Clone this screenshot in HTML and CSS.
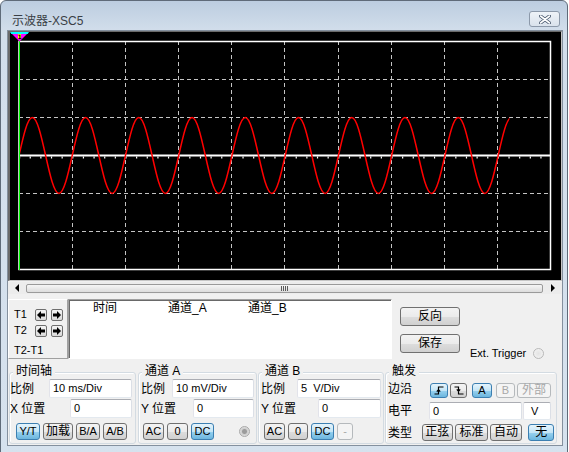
FILE: index.html
```html
<!DOCTYPE html>
<html lang="zh">
<head>
<meta charset="utf-8">
<title>示波器-XSC5</title>
<link rel="stylesheet" href="styles.css">
</head>
<body>
<div class="window">
  <div class="titlebar">
    <span class="title">示波器-XSC5</span>
    <button class="close" aria-label="关闭">
      <svg width="12" height="9" viewBox="0 0 12 9">
        <path d="M1.5 1 L10.5 8 M10.5 1 L1.5 8" stroke="#4b5b70" stroke-width="3.4" stroke-linecap="round"/>
        <path d="M1.5 1 L10.5 8 M10.5 1 L1.5 8" stroke="#ffffff" stroke-width="1.6" stroke-linecap="round"/>
      </svg>
    </button>
  </div>
  <div class="client">
    <div class="screen">
      <svg class="scope" width="551" height="248" viewBox="10 32 551 248">
        <defs>
          <clipPath id="clipA"><rect x="19" y="41" width="490.5" height="229"/></clipPath>
        </defs>
        <g class="grid">
          <line x1="72.5" y1="41" x2="72.5" y2="270"/>
          <line x1="125.5" y1="41" x2="125.5" y2="270"/>
          <line x1="178.5" y1="41" x2="178.5" y2="270"/>
          <line x1="231.5" y1="41" x2="231.5" y2="270"/>
          <line x1="284.5" y1="41" x2="284.5" y2="270"/>
          <line x1="338.5" y1="41" x2="338.5" y2="270"/>
          <line x1="391.5" y1="41" x2="391.5" y2="270"/>
          <line x1="444.5" y1="41" x2="444.5" y2="270"/>
          <line x1="497.5" y1="41" x2="497.5" y2="270"/>
          <line x1="19" y1="79.5" x2="551" y2="79.5"/>
          <line x1="19" y1="117.5" x2="551" y2="117.5"/>
          <line x1="19" y1="193.5" x2="551" y2="193.5"/>
          <line x1="19" y1="231.5" x2="551" y2="231.5"/>
        </g>
        <rect class="frame" x="19" y="41.5" width="531.5" height="228"/>
        <line class="trace-b" x1="19" y1="155.5" x2="550" y2="155.5"/>
        <line class="trace-b-ticks" x1="19" y1="157.5" x2="550" y2="157.5"/>
        <path class="trace-a" clip-path="url(#clipA)" d="M19 155.5
          c4.34,-19.47 8.49,-38 13.31,-38 4.82,0 8.97,18.53 13.31,38 4.34,19.47 8.49,38 13.31,38 4.82,0 8.97,-18.53 13.31,-38
          4.34,-19.47 8.49,-38 13.31,-38 4.82,0 8.97,18.53 13.31,38 4.34,19.47 8.49,38 13.31,38 4.82,0 8.97,-18.53 13.31,-38
          4.34,-19.47 8.49,-38 13.31,-38 4.82,0 8.97,18.53 13.31,38 4.34,19.47 8.49,38 13.31,38 4.82,0 8.97,-18.53 13.31,-38
          4.34,-19.47 8.49,-38 13.31,-38 4.82,0 8.97,18.53 13.31,38 4.34,19.47 8.49,38 13.31,38 4.82,0 8.97,-18.53 13.31,-38
          4.34,-19.47 8.49,-38 13.31,-38 4.82,0 8.97,18.53 13.31,38 4.34,19.47 8.49,38 13.31,38 4.82,0 8.97,-18.53 13.31,-38
          4.34,-19.47 8.49,-38 13.31,-38 4.82,0 8.97,18.53 13.31,38 4.34,19.47 8.49,38 13.31,38 4.82,0 8.97,-18.53 13.31,-38
          4.34,-19.47 8.49,-38 13.31,-38 4.82,0 8.97,18.53 13.31,38 4.34,19.47 8.49,38 13.31,38 4.82,0 8.97,-18.53 13.31,-38
          4.34,-19.47 8.49,-38 13.31,-38 4.82,0 8.97,18.53 13.31,38 4.34,19.47 8.49,38 13.31,38 4.82,0 8.97,-18.53 13.31,-38
          4.34,-19.47 8.49,-38 13.31,-38 4.82,0 8.97,18.53 13.31,38 4.34,19.47 8.49,38 13.31,38 4.82,0 8.97,-18.53 13.31,-38
          4.34,-19.47 8.49,-38 13.31,-38"/>
        <line class="cursor1" x1="19.5" y1="41" x2="19.5" y2="270"/>
        <polygon points="11,33 28,33 19.5,41.5" fill="#ff00ff"/>
        <polygon points="10,32 29,32 27.6,34 11.4,34" fill="#00ffff"/>
        <rect x="18" y="34" width="3" height="5" fill="#ffff00"/>
        <text x="19.5" y="39" class="cursor-num">1</text>
      </svg>
    </div>

    <div class="hscroll">
      <span class="sb-btn"><span class="tri-left"></span></span>
      <div class="track"><div class="thumb"><span class="grip"></span></div></div>
      <span class="sb-btn sb-right"><span class="tri-right"></span></span>
    </div>

    <div class="readout-row">
      <div class="cursors">
        <div class="cur-row">
          <span class="cur-label">T1</span>
          <span class="nudge"><svg width="8" height="8" viewBox="0 0 8 8"><path d="M0 4 L4 0 V2.4 H8 V5.6 H4 V8 Z"/></svg></span>
          <span class="nudge"><svg width="8" height="8" viewBox="0 0 8 8"><path d="M8 4 L4 0 V2.4 H0 V5.6 H4 V8 Z"/></svg></span>
        </div>
        <div class="cur-row second">
          <span class="cur-label">T2</span>
          <span class="nudge"><svg width="8" height="8" viewBox="0 0 8 8"><path d="M0 4 L4 0 V2.4 H8 V5.6 H4 V8 Z"/></svg></span>
          <span class="nudge"><svg width="8" height="8" viewBox="0 0 8 8"><path d="M8 4 L4 0 V2.4 H0 V5.6 H4 V8 Z"/></svg></span>
        </div>
        <div class="cur-diff">T2-T1</div>
      </div>
      <div class="readout">
        <span class="col col-time">时间</span>
        <span class="col col-a">通道_A</span>
        <span class="col">通道_B</span>
      </div>
      <div class="actions">
        <button class="btn big">反向</button>
        <button class="btn big">保存</button>
      </div>
      <div class="ext">Ext. Trigger <span class="radio"></span></div>
    </div>

    <div class="groups">
      <div class="group g-time">
        <span class="legend">时间轴</span>
        <div class="row">
          <span class="label">比例</span>
          <div class="field w83">10 ms/Div</div>
        </div>
        <div class="row">
          <span class="label">X 位置</span>
          <div class="field w62">0</div>
        </div>
        <div class="btn-row time-btns">
          <button class="btn on w24">Y/T</button>
          <button class="btn cjk w30">加载</button>
          <button class="btn w24">B/A</button>
          <button class="btn w24">A/B</button>
        </div>
      </div>

      <div class="group g-cha">
        <span class="legend">通道 A</span>
        <div class="row">
          <span class="label">比例</span>
          <div class="field w82">10 mV/Div</div>
        </div>
        <div class="row">
          <span class="label">Y 位置</span>
          <div class="field w61">0</div>
        </div>
        <div class="btn-row cha-btns">
          <button class="btn w21">AC</button>
          <button class="btn w21">0</button>
          <button class="btn on w23">DC</button>
          <span class="radio dot"></span>
        </div>
      </div>

      <div class="group g-chb">
        <span class="legend">通道 B</span>
        <div class="row">
          <span class="label">比例</span>
          <div class="field w84">5&nbsp; V/Div</div>
        </div>
        <div class="row">
          <span class="label">Y 位置</span>
          <div class="field w63">0</div>
        </div>
        <div class="btn-row chb-btns">
          <button class="btn w21">AC</button>
          <button class="btn w20">0</button>
          <button class="btn on w23">DC</button>
          <button class="btn off w16">-</button>
        </div>
      </div>

      <div class="group g-trig">
        <span class="legend">触发</span>
        <div class="row">
          <span class="label lbl-edge">边沿</span>
          <button class="btn on edge w18" aria-label="上升沿">
            <svg width="10" height="9" viewBox="0 0 10 9"><path d="M0.5 8 H4.5 V1 H9.5 M2.8 5.6 L4.5 3.6 L6.2 5.6" fill="none" stroke="#000" stroke-width="1.2"/></svg>
          </button>
          <button class="btn edge w17 m2" aria-label="下降沿">
            <svg width="10" height="9" viewBox="0 0 10 9"><path d="M0.5 1 H4.5 V8 H9.5 M2.8 3.4 L4.5 5.4 L6.2 3.4" fill="none" stroke="#000" stroke-width="1.2"/></svg>
          </button>
          <button class="btn on edge w20 m5">A</button>
          <button class="btn off edge w19 m4">B</button>
          <button class="btn off cjk edge w34 m2">外部</button>
        </div>
        <div class="row trig-level">
          <span class="label lbl-level">电平</span>
          <div class="field w93">0</div>
          <div class="field unit">V</div>
        </div>
        <div class="btn-row trig-type">
          <span class="label lbl-type">类型</span>
          <button class="btn cjk w32">正弦</button>
          <button class="btn cjk w33">标准</button>
          <button class="btn cjk w33">自动</button>
          <button class="btn on cjk w26 m4">无</button>
        </div>
      </div>
    </div>
  </div>
</div>
</body>
</html>
```
FILE: styles.css
```css
html, body {
  margin: 0;
  padding: 0;
  background: #ffffff;
}

body {
  font-family: "Liberation Sans", "Noto Sans CJK SC", sans-serif;
  font-size: 11px;
  color: #000;
}

.window {
  width: 568px;
  height: 460px;
  box-sizing: border-box;
  border: 1px solid #5f6b79;
  border-radius: 6px 6px 0 0;
  background: linear-gradient(#bccde0 0, #d2deeb 30px, #d6e2ee 100%);
  overflow: hidden;
}

.titlebar {
  height: 29px;
  display: flex;
  align-items: flex-start;
}

.title {
  margin: 12px 0 0 11px;
  font-size: 12px;
  line-height: 16px;
  color: #3a3f46;
}

.close {
  margin: 10px 7px 0 auto;
  width: 31px;
  height: 16px;
  padding: 0;
  box-sizing: border-box;
  border: 1px solid #8c99aa;
  border-radius: 3px;
  background: linear-gradient(#eef3f8, #d9e2ec);
  display: flex;
  align-items: center;
  justify-content: center;
}

.close svg {
  display: block;
}

.client {
  margin-left: 6px;
  width: 556px;
  height: 416px;
  box-sizing: border-box;
  border: 1px solid #84909e;
  background: #f0f0f0;
}

/* oscilloscope screen */
.screen {
  width: 554px;
  height: 250px;
  box-sizing: border-box;
  border-style: solid;
  border-width: 1px 1px 1px 2px;
  border-color: #6a6a6a #c6c6c6 #c6c6c6 #6a6a6a;
  background: #000;
}

.scope {
  display: block;
}

.grid line {
  stroke: #c4c4c4;
  stroke-width: 1;
  stroke-dasharray: 4 3;
}

.frame {
  fill: none;
  stroke: #ffffff;
  stroke-width: 1.5;
}

.trace-b {
  stroke: #ffffff;
  stroke-width: 2;
}

.trace-b-ticks {
  stroke: #ffffff;
  stroke-width: 2;
  stroke-dasharray: 1.2 9.44;
}

.trace-a {
  fill: none;
  stroke: #ff0000;
  stroke-width: 1.5;
}

.cursor1 {
  stroke: #00ff00;
  stroke-width: 1;
}

.cursor-num {
  font-family: "DejaVu Sans", sans-serif;
  font-size: 6px;
  font-weight: bold;
  text-anchor: middle;
  fill: #000;
}

/* horizontal scroll bar */
.hscroll {
  margin-top: 1px;
  height: 12px;
  display: flex;
  align-items: center;
  background: #ececec;
}

.sb-btn {
  width: 17px;
  height: 12px;
  display: flex;
  align-items: center;
  justify-content: center;
}

.sb-right {
  width: 18px;
}

.tri-left {
  width: 0;
  height: 0;
  border-top: 4px solid transparent;
  border-bottom: 4px solid transparent;
  border-right: 4px solid #000;
}

.tri-right {
  width: 0;
  height: 0;
  border-top: 4px solid transparent;
  border-bottom: 4px solid transparent;
  border-left: 4px solid #000;
}

.track {
  flex: 1;
  height: 12px;
  display: flex;
  align-items: center;
}

.thumb {
  flex: 1;
  margin: 0 1px;
  height: 9px;
  box-sizing: border-box;
  border: 1px solid #9a9a9a;
  border-radius: 2px;
  background: linear-gradient(#f6f6f6, #dcdcdc);
  display: flex;
  align-items: center;
  justify-content: center;
}

.grip {
  width: 7px;
  height: 5px;
  background: repeating-linear-gradient(to right, #5a5a5a 0 1px, transparent 1px 2px);
}

/* cursor / readout row */
.readout-row {
  margin-top: 5px;
  height: 60px;
  display: flex;
  align-items: flex-start;
}

.cursors {
  width: 60px;
  height: 60px;
  box-sizing: border-box;
  border: 1px solid;
  border-color: #ffffff #a0a0a0 #a0a0a0 #ffffff;
  padding: 8px 0 0 5px;
}

.cur-row {
  display: flex;
  align-items: center;
  height: 13px;
}

.cur-row.second {
  margin-top: 3px;
}

.cur-label {
  width: 21px;
  font-size: 11px;
  line-height: 13px;
}

.nudge {
  width: 12px;
  height: 12px;
  margin-right: 4px;
  box-sizing: border-box;
  border: 1px solid #6f6f6f;
  border-radius: 2px;
  background: linear-gradient(#f4f4f4, #dadada);
  display: flex;
  align-items: center;
  justify-content: center;
}

.nudge svg {
  display: block;
  fill: #000;
}

.cur-diff {
  margin-top: 6px;
  font-size: 11px;
  line-height: 14px;
}

.readout {
  width: 324px;
  height: 60px;
  box-sizing: border-box;
  background: #ffffff;
  border: 1px solid;
  border-color: #a0a0a0 #ffffff #ffffff #a0a0a0;
  box-shadow: inset 1px 1px 0 #696969;
  padding: 1px 0 0 24px;
  display: flex;
  align-items: flex-start;
}

.col {
  font-size: 12px;
  line-height: 14px;
}

.col-time {
  width: 75px;
}

.col-a {
  width: 80px;
}

.actions {
  margin-left: 8px;
  padding-top: 8px;
  display: flex;
  flex-direction: column;
  gap: 8px;
}

.ext {
  margin-left: 10px;
  align-self: flex-end;
  display: flex;
  align-items: center;
  gap: 7px;
  font-size: 11px;
  line-height: 12px;
  margin-bottom: 0;
}

.radio {
  display: inline-block;
  width: 11px;
  height: 11px;
  box-sizing: border-box;
  border: 1px solid #b9b9b9;
  border-radius: 50%;
  background: radial-gradient(circle, #e3e3e3 0, #f6f6f6 100%);
}

.radio.dot {
  margin-left: 25px;
  border-color: #a9a9a9;
  background: radial-gradient(circle, #9c9c9c 0 2px, #cfcfcf 3px, #efefef 100%);
}

/* buttons */
.btn {
  height: 17px;
  padding: 0;
  box-sizing: border-box;
  border: 1px solid #707070;
  border-radius: 3px;
  background: linear-gradient(#f3f3f3 0%, #ebebeb 50%, #dddddd 51%, #d0d0d0 100%);
  font-family: "Liberation Sans", "Noto Sans CJK SC", sans-serif;
  font-size: 11px;
  line-height: 15px;
  color: #000;
  display: flex;
  align-items: center;
  justify-content: center;
}

.btn.cjk {
  font-size: 12px;
}

.btn.big {
  width: 60px;
  height: 19px;
  font-size: 12px;
}

.btn.on {
  border-color: #3c7fb1;
  background: linear-gradient(#e5f4fc 0%, #c4e5f6 50%, #98d1ef 51%, #6cb6de 100%);
}

.btn.off {
  color: #a8a8a8;
  border-color: #b5b9bc;
  background: #f4f4f4;
}

.btn.edge {
  height: 15px;
  align-self: flex-end;
}

.btn svg {
  display: block;
}

.w16 { width: 16px; }
.w17 { width: 17px; }
.w18 { width: 18px; }
.w19 { width: 19px; }
.w20 { width: 20px; }
.w21 { width: 21px; }
.w23 { width: 23px; }
.w24 { width: 24px; }
.w26 { width: 26px; }
.w30 { width: 30px; }
.w32 { width: 32px; }
.w33 { width: 33px; }
.w34 { width: 34px; }

.m2 { margin-left: 2px; }
.m4 { margin-left: 4px; }
.m5 { margin-left: 5px; }

/* group boxes */
.groups {
  margin-top: 13px;
  padding-left: 1px;
  display: flex;
}

.group {
  position: relative;
  height: 72px;
  box-sizing: border-box;
  border: 1px solid #d3dbe2;
  border-radius: 3px;
  box-shadow: inset 1px 1px 0 #ffffff;
  padding: 6px 2px 0 2px;
}

.g-time {
  width: 127px;
  padding-left: 0;
  padding-right: 3px;
}

.g-cha {
  width: 119px;
  margin-left: 2px;
}

.g-chb {
  width: 126px;
  margin-left: 1px;
}

.g-trig {
  width: 172px;
  margin-left: 1px;
}

.legend {
  position: absolute;
  top: -10px;
  left: 3px;
  padding: 0 3px;
  background: #f0f0f0;
  font-size: 12px;
  line-height: 16px;
}

.row {
  height: 19px;
  display: flex;
  align-items: center;
}

.row + .row {
  margin-top: 1px;
}

.label {
  font-size: 12px;
  line-height: 16px;
  white-space: nowrap;
}

.field {
  margin-left: auto;
  height: 19px;
  box-sizing: border-box;
  background: #ffffff;
  border: 1px solid;
  border-color: #abadb3 #dbdfe6 #e3e9ef #e2e3ea;
  border-radius: 2px;
  padding-left: 3px;
  font-size: 11px;
  line-height: 17px;
  white-space: nowrap;
}

.w61 { width: 61px; }
.w62 { width: 62px; }
.w63 { width: 63px; }
.w82 { width: 82px; }
.w83 { width: 83px; }
.w84 { width: 84px; }
.w93 { width: 93px; }

.btn-row {
  margin-top: 5px;
  height: 17px;
  display: flex;
  align-items: center;
  gap: 3px;
}

.time-btns {
  margin-left: 6px;
}

.cha-btns {
  margin-left: 2px;
  gap: 0;
}

.cha-btns .btn + .btn {
  margin-left: 3px;
}

.chb-btns {
  margin-left: 3px;
}

/* trigger group */
.lbl-edge {
  width: 42px;
}

.lbl-level {
  width: 41px;
}

.lbl-type {
  width: 32px;
}

.trig-level {
  height: 18px;
}

.row.trig-level {
  margin-top: 4px;
}

.trig-level .field {
  margin-left: 0;
  height: 18px;
  line-height: 16px;
}

.field.unit {
  width: 28px;
  margin-left: 1px;
  padding-left: 7px;
}

.trig-type {
  margin-top: 4px;
  gap: 2px;
}
```
